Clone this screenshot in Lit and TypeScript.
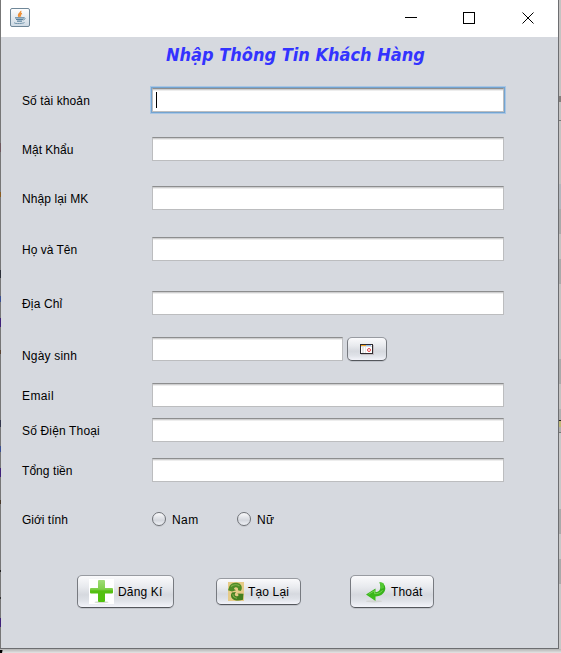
import { LitElement, html, css, svg } from "lit";
import { customElement, property } from "lit/decorators.js";

interface Field {
  label: string;
  gap: number;
  spacing?: number;
  kind?: "focused" | "date";
}

const FIELDS: Field[] = [
  { label: "Số tài khoản", gap: 18, kind: "focused", spacing: 0.1 },
  { label: "Mật Khẩu", gap: 25 },
  { label: "Nhập lại MK", gap: 25, spacing: 0.1 },
  { label: "Họ và Tên", gap: 27 },
  { label: "Địa Chỉ", gap: 30, spacing: 0.15 },
  { label: "Ngày sinh", gap: 22, kind: "date", spacing: 0.18 },
  { label: "Email", gap: 22, spacing: 0.4 },
  { label: "Số Điện Thoại", gap: 11, spacing: 0.16 },
  { label: "Tổng tiền", gap: 16, spacing: 0.06 },
];

const javaIcon = svg`<svg width="20" height="19" viewBox="0 0 20 19">
  <defs><linearGradient id="j" x1="0" y1="0" x2="0" y2="1"><stop offset="0" stop-color="#fff"/><stop offset="1" stop-color="#cdd9e3"/></linearGradient></defs>
  <rect x=".5" y=".5" width="19" height="18" rx="1.500" fill="url(#j)" stroke="#6f8798"/>
  <path d="M10.600 3C12 5 6.500 5.500 9.300 9M12 5.500C9.500 6.300 10.200 7 10.600 8.600" fill="none" stroke="#ef8f35" stroke-width="1.500"/>
  <path d="M5 9.900h9M6 11.500h7M7 13.100h5" fill="none" stroke="#5b829e" stroke-width="1.200"/>
  <path d="M13.500 9.800c2.500-.5 2 2-.8 2.300M4.500 14.500c-2 1.300 8 1.500 10 0" fill="none" stroke="#7395ac"/>
</svg>`;

const calendarIcon = svg`<svg width="14" height="11" viewBox="0 0 14 11" shape-rendering="crispEdges">
  <path d="M1 1h13v10H1z" fill="#c5bfc4"/>
  <path d="M0 0h13v10H0z" fill="#2e2b30"/>
  <path d="M1 1h11v8H1z" fill="#fff"/>
  <path d="M1 1h5v1H1z" fill="#f5a623"/><path d="M6 1h5v1H6z" fill="#93bdf2"/>
  <path d="M1 2h11v1H1z" fill="#dedede"/><path d="M2 3h2v6H2zM5 3h1v6H5z" fill="#e8e8e8"/>
  <circle cx="9" cy="6" r="1.500" fill="#fff" stroke="#e8474c" shape-rendering="auto"/>
</svg>`;

const plusIcon = svg`<svg width="25" height="25" viewBox="0 0 25 25">
  <defs><linearGradient id="p" x1="0" y1="0" x2="0" y2="1"><stop offset="0" stop-color="#a0dc78"/><stop offset=".42" stop-color="#7fcf4a"/><stop offset=".5" stop-color="#55bf12"/><stop offset="1" stop-color="#4fc20c"/></linearGradient></defs>
  <path d="M0 0h25v25H0z" fill="#fff"/><ellipse cx="12.500" cy="23.200" rx="7" ry="1" fill="#d5dcd1"/>
  <path d="M10 1h5q1 0 1 1v7h7q1 0 1 1v3.500q0 1-1 1h-7V22q0 1-1 1h-5q-1 0-1-1v-7.500H2q-1 0-1-1V10q0-1 1-1h7V2q0-1 1-1z" fill="url(#p)"/>
</svg>`;

const recycleIcon = svg`<svg width="16" height="19" viewBox="0 0 16 19">
  <path d="M0 0h16v19H0z" fill="#e6cb88"/>
  <path d="M1 5.500C2 2 5 .8 8 .8c3.500 0 5.800 2.200 5.800 5 0 1.500-.5 2.700-1.300 3.200L10 8.300C10.500 6.300 9.300 5 7.500 5.300 6.500 5.500 6 6.300 6 7L8 8.300 4 9.500 0 8.300z" fill="#4f8c27"/>
  <path d="M15 17.800c-4 1.200-8 1-10.300-.8C2.500 15.300 2.500 12.300 4 10.500L8 10c-1.500 1.500-1.700 3.200-.3 4 1.300.6 2.500.2 3-1L9.300 11.500l6.200.3-.3 2.700z" fill="#447f20"/>
  <path d="M3 4.500C5 2.500 9 2 11.500 4M5 12c-.5 2 1 3.800 4 4.300" fill="none" stroke="#86b24d" stroke-width="1.100"/>
</svg>`;

const backIcon = svg`<svg width="22" height="22" viewBox="0 0 22 22">
  <defs><linearGradient id="b" x1="0" y1="0" x2="0" y2="1"><stop offset="0" stop-color="#31a51b"/><stop offset="1" stop-color="#3fc01c"/></linearGradient></defs>
  <ellipse cx="9" cy="20.300" rx="8" ry="1.100" fill="#d2d5d3"/>
  <path d="M14.500 1.200C20 1.500 22.500 8 18 12.500 16 14.700 13 15.500 10.500 15.500V20L1 13.500 10.500 7.500V11.200C15 11.200 16.500 7 14.500 1.200z" fill="url(#b)"/>
  <path d="M14.500 1.200l4 .8.500 5-3.200 1q.2-3.500-1.300-6.800z" fill="#52c932"/>
  <path d="M3.500 13.300L9.500 9.700v3c3 0 6-.5 8-3.500" fill="none" stroke="#74d650"/>
</svg>`;

@customElement("swing-button")
class SwingButton extends LitElement {
  static styles = css`
    :host { display: flex; align-items: center; justify-content: center; box-sizing: border-box; }
    .face {
      width: 100%; height: 100%; box-sizing: border-box; display: flex; align-items: center;
      gap: 4px; padding-left: 11px;
      border: 1px solid #777a80; border-top-color: #989ba1; border-bottom-color: #54575c; border-radius: 5px;
      background: linear-gradient(#fafafc 0%, #e8eaee 35%, #d6d9df 60%, #dfe2e8 80%, #f3f4fa 100%);
      box-shadow: 0 1px 0 #c0c3ca;
    }
  `;
  render() {
    return html`<div class="face"><slot></slot></div>`;
  }
}

@customElement("form-field")
class FormField extends LitElement {
  @property() label = "";
  @property() kind = "";
  static styles = css`
    :host { display: flex; height: 24px; }
    .label { width: 130px; line-height: 14px; padding-top: 6px; white-space: nowrap; }
    .label.date { padding-top: 12px; }
    .box {
      width: 352px; height: 24px; box-sizing: border-box; background: #fff;
      border: 1px solid #bcbdbf; border-top-color: #8d8e8f; letter-spacing: 0;
      box-shadow: inset 0 1px #cfcfd0, inset 0 2px #ededed;
    }
    .box.date { width: 191px; }
    .box.focused {
      outline: 1px solid #73a4d1;
      box-shadow: 0 0 0 2px #a9c6e4, inset 0 1px #cfcfd0, inset 0 2px #ededed;
      padding: 3px 0 0 3px;
    }
    .caret { width: 1px; height: 16px; background: #000; }
    .picker { width: 40px; height: 24px; margin-left: 4px; }
    .glyph { display: flex; margin-left: 1px; }
  `;
  render() {
    return html`
      <div class="label ${this.kind}">${this.label}</div>
      <div class="box ${this.kind}">${this.kind === "focused" ? html`<div class="caret"></div>` : ""}</div>
      ${this.kind === "date"
        ? html`<swing-button class="picker"><span class="glyph">${calendarIcon}</span></swing-button>`
        : ""}
    `;
  }
}

@customElement("app-root")
class AppRoot extends LitElement {
  static styles = css`
    :host {
      display: block; width: 561px; height: 653px; overflow: hidden; box-sizing: border-box;
      font: 12px "Liberation Sans", Arial, sans-serif; color: #000;
      background:
        linear-gradient(100deg, #000 0 2px, transparent 3px) 0 650px / 4px 3px no-repeat,
        linear-gradient(#c5c3c2 96px, #827e7c 96px 102px, #c5c3c2 102px 120px, #777 120px 121px,
          #c5c3c2 121px 184px, #b3b7bd 184px 209px, #aaa 209px 234px, #c5c3c2 234px 259px,
          #aaa 259px 284px, #c5c3c2 284px 359px, #aaa 359px 384px, #c5c3c2 384px 409px,
          #b0b0b0 409px 420px, #222 420px 421px, #bfb878 421px 427px, #b0b0b0 427px 432px, #777 432px 433px,
          #c8c8c8 433px 509px, #aaa 509px 534px, #c8c8c8 534px 559px, #aaa 559px 584px, #c8c8c8 584px)
          559px 0 / 2px 649px no-repeat,
        linear-gradient(#b4b4b4 649px, #e4e4e4 653px);
    }
    .window {
      width: 559px; height: 649px; box-sizing: border-box; padding-left: 1px;
      border: 1px solid #6d6e71; border-top: 0; border-left: 0;
      background:
        linear-gradient(#777 143px, #70585e 143px 152px, #777 152px 192px, #8a5c20 192px 197px,
          #777 197px 270px, #2c3038 270px 278px, #777 278px 296px, #3a4f92 296px 302px,
          #777 302px 318px, #40217a 318px 327px, #777 327px 350px, #5b4433 350px 354px,
          #777 354px 420px, #33374d 420px 427px, #777 427px 446px, #3a4f92 446px 452px,
          #777 452px 468px, #40217a 468px 477px, #777 477px 500px, #4a3a2a 500px 504px,
          #777 504px 570px, #222 570px 572px, #777 572px 597px, #333 597px 599px,
          #777 599px 618px, #40217a 618px 627px, #777 627px) 0 0 / 1px 100% no-repeat,
        #d6d9df;
    }
    .titlebar { height: 37px; background: #fff; display: flex; justify-content: space-between; }
    .java { display: flex; padding: 8px 0 0 9px; }
    .controls { display: flex; }
    .title {
      height: 33px; padding-left: 165px; white-space: nowrap; color: #33f;
      font: italic bold 18px/35px "DejaVu Sans Condensed", "DejaVu Sans", sans-serif;
      font-stretch: condensed;
    }
    .form { padding-left: 21px; }
    .genders { display: flex; padding-left: 21px; margin-top: 30px; height: 14px; line-height: 14px; }
    .genders .name { width: 130px; padding-top: 1px; }
    .radio { display: flex; gap: 6px; width: 85px; letter-spacing: 0.4px; }
    .radio span { padding-top: 1px; }
    .dot {
      width: 14px; height: 14px; box-sizing: border-box; border-radius: 50%;
      border: 1px solid #6f7277; background: linear-gradient(#fafafc, #d4d7dd 60%, #eff1f6);
      box-shadow: 0 1px #c5c8ce;
    }
    .actions { display: flex; align-items: center; padding-left: 76px; margin-top: 49px; height: 33px; letter-spacing: 0.15px; }
    .add { width: 97px; height: 33px; margin-right: 42px; }
    .reset { width: 85px; height: 27px; margin-right: 49px; }
    .exit { width: 84px; height: 33px; }
    .glyph { display: flex; }
    .exit .glyph { margin-left: 3px; }
  `;
  render() {
    return html`
      <div class="window">
        <div class="titlebar">
          <div class="java">${javaIcon}</div>
          <svg class="controls" width="168" height="37" shape-rendering="crispEdges" fill="none" stroke="#000">
            <path d="M15 17.500h12M73.500 12.500h11v11h-11z" />
            <path d="M132.500 12.500l11 11M143.500 12.500l-11 11" shape-rendering="auto" />
          </svg>
        </div>
        <div class="title">Nhập Thông Tin Khách Hàng</div>
        <div class="form">
          ${FIELDS.map(
            (f) => html`<form-field
              .label=${f.label}
              .kind=${f.kind ?? ""}
              style="margin-top:${f.gap}px;letter-spacing:${f.spacing ?? 0}px"
            ></form-field>`
          )}
        </div>
        <div class="genders">
          <div class="name">Giới tính</div>
          <div class="radio"><i class="dot"></i><span>Nam</span></div>
          <div class="radio"><i class="dot"></i><span>Nữ</span></div>
        </div>
        <div class="actions">
          <swing-button class="add"><span class="glyph">${plusIcon}</span><span>Dăng Kí</span></swing-button>
          <swing-button class="reset"><span class="glyph">${recycleIcon}</span><span>Tạo Lại</span></swing-button>
          <swing-button class="exit"><span class="glyph">${backIcon}</span><span>Thoát</span></swing-button>
        </div>
      </div>
    `;
  }
}
